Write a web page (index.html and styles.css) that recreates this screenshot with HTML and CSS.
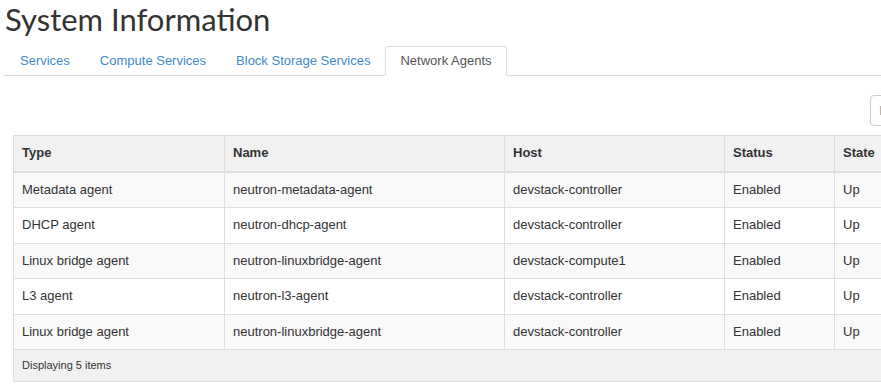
FILE: index.html
```html
<!DOCTYPE html>
<html lang="en">
<head>
  <meta charset="UTF-8">
  <title>System Information</title>
  <link rel="stylesheet" href="styles.css">
</head>
<body>

  <div class="page">
    <h1 class="page-title">System Information</h1>

    <ul class="nav-tabs">
      <li><a href="#">Services</a></li>
      <li><a href="#">Compute Services</a></li>
      <li><a href="#">Block Storage Services</a></li>
      <li class="active"><a href="#">Network Agents</a></li>
    </ul>

    <div class="tab-pane">
      <div class="table-actions">
        <input class="filter" type="text" placeholder="Filter">
      </div>

      <table class="agents">
        <colgroup>
          <col style="width: 211px">
          <col style="width: 280px">
          <col style="width: 220px">
          <col style="width: 110px">
          <col>
        </colgroup>
        <thead>
          <tr>
            <th>Type</th>
            <th>Name</th>
            <th>Host</th>
            <th>Status</th>
            <th>State</th>
          </tr>
        </thead>
        <tbody>
          <tr>
            <td>Metadata agent</td>
            <td>neutron-metadata-agent</td>
            <td>devstack-controller</td>
            <td>Enabled</td>
            <td>Up</td>
          </tr>
          <tr>
            <td>DHCP agent</td>
            <td>neutron-dhcp-agent</td>
            <td>devstack-controller</td>
            <td>Enabled</td>
            <td>Up</td>
          </tr>
          <tr>
            <td>Linux bridge agent</td>
            <td>neutron-linuxbridge-agent</td>
            <td>devstack-compute1</td>
            <td>Enabled</td>
            <td>Up</td>
          </tr>
          <tr>
            <td>L3 agent</td>
            <td>neutron-l3-agent</td>
            <td>devstack-controller</td>
            <td>Enabled</td>
            <td>Up</td>
          </tr>
          <tr>
            <td>Linux bridge agent</td>
            <td>neutron-linuxbridge-agent</td>
            <td>devstack-controller</td>
            <td>Enabled</td>
            <td>Up</td>
          </tr>
        </tbody>
        <tfoot>
          <tr>
            <td colspan="5">Displaying 5 items</td>
          </tr>
        </tfoot>
      </table>
    </div>
  </div>

</body>
</html>
```

FILE: styles.css
```css
body {
  margin: 0;
  overflow: hidden;
  font-family: 'Liberation Sans', Arial, sans-serif;
  font-size: 13px;
  line-height: 1.42857;
  color: #333;
  background: #fff;
}

.page {
  width: 1026px;
  padding-left: 4px;
}

.page-title {
  margin: 0;
  padding: 0 0 8px 1px;
  font-family: Lato, sans-serif;
  font-weight: 400;
  font-size: 31px;
  line-height: 38px;
  color: #333;
}

.nav-tabs {
  display: flex;
  list-style: none;
  margin: 0;
  padding: 0 0 0 1px;
  border-bottom: 1px solid #ddd;
}

.nav-tabs li {
  margin-bottom: -1px;
}

.nav-tabs a {
  display: block;
  padding: 5px 14px;
  line-height: 18px;
  border: 1px solid transparent;
  border-radius: 3px 3px 0 0;
  color: #428bca;
  text-decoration: none;
}

.nav-tabs li.active a {
  color: #555;
  background: #fff;
  border-color: #ddd #ddd transparent;
}

.tab-pane {
  padding: 19px 0 0 9px;
}

.table-actions {
  display: flex;
  justify-content: flex-end;
  margin-bottom: 9px;
}

.filter {
  width: 160px;
  height: 31px;
  box-sizing: border-box;
  padding: 5px 8px;
  border: 1px solid #ccc;
  border-radius: 4px;
  font-family: 'Liberation Sans', Arial, sans-serif;
  font-size: 13px;
}

.filter::placeholder {
  color: #aaa;
}

.agents {
  width: 100%;
  table-layout: fixed;
  border-collapse: collapse;
  border: 1px solid #ddd;
}

.agents th,
.agents td {
  padding: 8px;
  text-align: left;
  border: 1px solid #ddd;
  white-space: nowrap;
}

.agents thead th {
  background: #f1f1f1;
  border-bottom-width: 2px;
  font-weight: bold;
}

.agents tbody tr:nth-child(odd) td {
  background: #f9f9f9;
}

.agents tfoot td {
  background: #f1f1f1;
  font-size: 11px;
  line-height: 15px;
}
```
